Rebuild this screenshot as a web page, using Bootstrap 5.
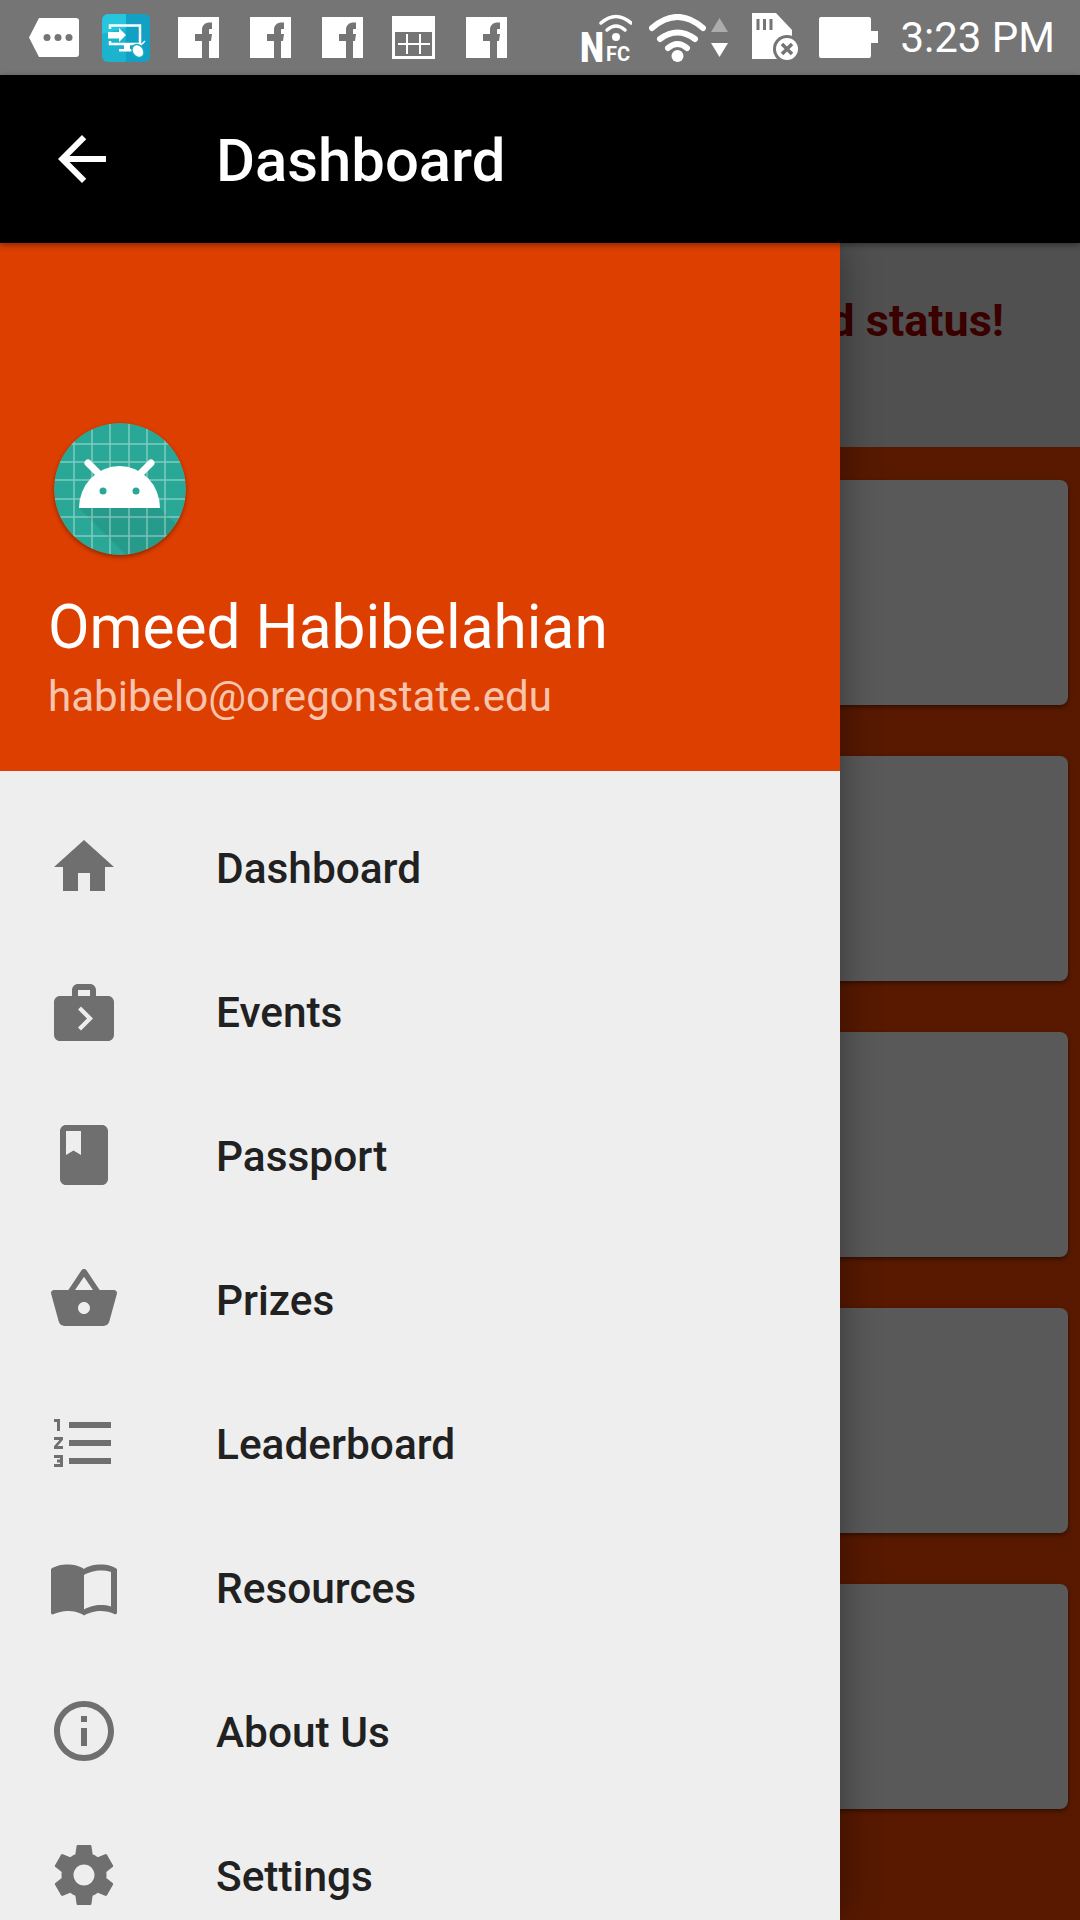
<!DOCTYPE html>
<html>
<head>
  <title>Dashboard</title>
  <link rel="stylesheet" href="https://cdn.jsdelivr.net/npm/bootstrap@5.3.3/dist/css/bootstrap.min.css">
  <style>
    html, body { height: 1920px; overflow: hidden; }
    body { font-family: Roboto, "Liberation Sans", sans-serif; background: #dc3f00; }
    .phone { width: 1080px; height: 1920px; }

    .sys-bar { height: 75px; background: #757575; padding: 0 25px 0 29px; color: #fff; }
    .sys-bar svg { display: block; flex: none; }
    .sys-time { font-size: 42px; line-height: 75px; margin-left: 22px; margin-top: -1px; }
    .ml-teal { margin-left: 23px; }
    .ml-f1 { margin-left: 28px; }
    .ml-f { margin-left: 31px; }
    .ml-tbl { margin-left: 29px; }
    .ml-wifi { margin-left: 17px; }
    .ml-arrows { margin-left: 5px; }
    .ml-sd { margin-left: 23px; }
    .ml-batt { margin-left: 18px; }

    .app-bar { height: 168px; background: #000; padding: 0 0 0 46px; flex-wrap: nowrap; position: relative; z-index: 3; box-shadow: 0 2px 6px rgba(0,0,0,.4); }
    .app-title { font-size: 59.8px; font-weight: 500; color: #fff; margin-left: 98px; margin-top: 5px; line-height: 1; }

    .content-area { height: 1677px; overflow: hidden; background: #dc3f00; }
    .status-panel { height: 204px; background: #c8c8c8; padding: 52px 76px 0 0; }
    .status-text { font-size: 45px; font-weight: 700; color: #920000; line-height: 52px; }
    .card-stack { padding: 33px 12px 0; gap: 51px; }
    .blank-card { height: 225px; background: #dedede; border: 0; border-radius: 8px; box-shadow: 0 2px 5px rgba(0,0,0,.45); }
    .scrim { inset: 0; background: rgba(0,0,0,.6); z-index: 1; }

    .drawer { top: 0; left: 0; bottom: 0; width: 840px; background: #eeeeee; z-index: 2; box-shadow: 0 0 36px rgba(0,0,0,.4); overflow: hidden; }
    .drawer-head { height: 528px; background: #dc3f00; padding: 180px 0 0 48px; color: #fff; }
    .avatar { display: block; width: 132px; height: 132px; margin-left: 6px; border-radius: 50%; box-shadow: 0 2px 4px rgba(0,0,0,.35); }
    .user-name { font-size: 60.4px; line-height: 72px; margin-top: 37px; }
    .user-mail { font-size: 42.1px; line-height: 56px; margin-top: 5px; color: #f8c4ad; }

    .drawer-menu { padding-top: 25px; }
    .menu-row { height: 144px; padding: 0 0 0 48px; background: transparent; border: 0; gap: 96px; font-size: 42.4px; font-weight: 500; color: #212121; }
    .menu-row svg { width: 72px; height: 72px; margin-top: -2px; fill: #6f6f6f; flex: none; }
    .menu-row span { margin-top: 2px; }
  </style>
</head>
<body>
  <div class="phone d-flex flex-column">

    <div class="sys-bar d-flex align-items-center">
      <svg width="50" height="39" viewBox="0 0 50 39"><path fill="#fff" d="M10 0H47a3 3 0 0 1 3 3V36a3 3 0 0 1-3 3H10L0 19.5Z"/><g fill="#757575"><circle cx="18" cy="19.5" r="3.5"/><circle cx="29" cy="19.5" r="3.5"/><circle cx="40" cy="19.5" r="3.5"/></g></svg>
      <svg class="ml-teal" width="48" height="48" viewBox="0 0 48 48">
        <rect width="48" height="48" rx="6" fill="#1cb3cf"/>
        <path fill="#12a0c4" d="M24 0H42a6 6 0 0 1 6 6V42a6 6 0 0 1-6 6H24Z"/>
        <path fill="#2bd0e2" d="M6 0H24V14L0 20V6A6 6 0 0 1 6 0Z" opacity=".7"/>
        <path fill="none" stroke="#fff" stroke-width="2.5" d="M8 15V11.500H38V30H8V27"/>
        <path fill="#fff" d="M6 18H17V14L24 21 17 28V24.500H6Z"/>
        <path fill="#fff" d="M22 30H28V35H35V37.500H17V35H22Z"/>
        <ellipse cx="36" cy="37" rx="5.500" ry="7" fill="#fff" stroke="#19acc9" stroke-width="1.500" transform="rotate(-35 36 37)"/>
        <path d="M39 31L43 27" stroke="#fff" stroke-width="1.500"/>
      </svg>
      <svg class="ml-f1" width="41" height="41" viewBox="0 0 41 41"><path fill="#fff" fill-rule="evenodd" d="M0 0H41V41H0ZM24 41H31V24H33L34 17H31V14C31 12.500 31 12 32 12H34V5.500H32C27 5.500 24 8 24 13V17H17V24H24Z"/></svg>
      <svg class="ml-f" width="41" height="41" viewBox="0 0 41 41"><path fill="#fff" fill-rule="evenodd" d="M0 0H41V41H0ZM24 41H31V24H33L34 17H31V14C31 12.500 31 12 32 12H34V5.500H32C27 5.500 24 8 24 13V17H17V24H24Z"/></svg>
      <svg class="ml-f" width="41" height="41" viewBox="0 0 41 41"><path fill="#fff" fill-rule="evenodd" d="M0 0H41V41H0ZM24 41H31V24H33L34 17H31V14C31 12.500 31 12 32 12H34V5.500H32C27 5.500 24 8 24 13V17H17V24H24Z"/></svg>
      <svg class="ml-tbl" width="43" height="43" viewBox="0 0 43 43"><rect width="43" height="43" fill="#fff"/><rect x="3" y="16" width="37" height="24" fill="#757575"/><path stroke="#fff" stroke-width="2" d="M6 28H38M15 18V38M28 18V38"/></svg>
      <svg class="ml-f" width="41" height="41" viewBox="0 0 41 41"><path fill="#fff" fill-rule="evenodd" d="M0 0H41V41H0ZM24 41H31V24H33L34 17H31V14C31 12.500 31 12 32 12H34V5.500H32C27 5.500 24 8 24 13V17H17V24H24Z"/></svg>

      <svg class="ms-auto" width="52" height="68" viewBox="0 -10 52 68">
        <g fill="none" stroke="#fff" stroke-width="3.500" stroke-linecap="round"><path d="M21 9Q36 -4 51 9"/><path d="M27 16Q36 8 45 16"/></g>
        <circle cx="36" cy="23" r="4" fill="#fff"/>
        <text x="0" y="48" fill="#fff" font-family="Roboto, sans-serif" font-weight="900" font-size="42" textLength="24" lengthAdjust="spacingAndGlyphs">N</text>
        <text x="26" y="47" fill="#fff" font-family="Roboto, sans-serif" font-weight="700" font-size="20">FC</text>
      </svg>
      <svg class="ml-wifi" width="57" height="48" viewBox="0 0 57 48">
        <g fill="none" stroke="#fff" stroke-width="6" stroke-linecap="round"><path d="M3 14Q28.500 -8 54 14"/><path d="M11 25Q28.500 12 46 25"/><path d="M19 34Q28.500 26 38 34"/></g>
        <circle cx="28.500" cy="42" r="6" fill="#fff"/>
      </svg>
      <svg class="ml-arrows" width="17" height="39" viewBox="0 0 17 39"><path fill="#fff" opacity=".4" d="M8.500 0L17 14H0Z"/><path fill="#fff" d="M0 25H17L8.500 39Z"/></svg>
      <svg class="ml-sd" width="50" height="50" viewBox="0 0 50 50">
        <path fill="#fff" d="M1 0H25L41 17V46H1Z"/>
        <path stroke="#757575" stroke-width="3" d="M7 6V17M13.500 6V17M20 6V17"/>
        <circle cx="36" cy="36" r="14" fill="#757575"/>
        <circle cx="36" cy="36" r="11" fill="#fff"/>
        <path stroke="#757575" stroke-width="3.500" d="M31 31L41 41M41 31L31 41"/>
      </svg>
      <svg class="ml-batt" width="59" height="41" viewBox="0 0 59 41"><path fill="#fff" d="M2 0H50a2 2 0 0 1 2 2V14H59V26H52V39a2 2 0 0 1-2 2H2a2 2 0 0 1-2-2V2a2 2 0 0 1 2-2Z"/></svg>
      <div class="sys-time">3:23 PM</div>
    </div>

    <nav class="navbar app-bar align-items-center justify-content-start">
      <svg width="72" height="72" viewBox="0 0 24 24"><path fill="#fff" d="M20 11H7.830l5.590-5.590L12 4l-8 8 8 8 1.410-1.410L7.830 13H20v-2z"/></svg>
      <span class="app-title">Dashboard</span>
    </nav>

    <div class="content-area position-relative">
      <div class="status-panel d-flex justify-content-end align-items-start">
        <div class="status-text text-nowrap">d status!</div>
      </div>
      <div class="card-stack d-flex flex-column">
        <div class="card blank-card"></div>
        <div class="card blank-card"></div>
        <div class="card blank-card"></div>
        <div class="card blank-card"></div>
        <div class="card blank-card"></div>
      </div>

      <div class="scrim position-absolute"></div>

      <aside class="drawer position-absolute">
        <div class="drawer-head">
          <svg class="avatar" viewBox="0 0 132 132">
            <defs><clipPath id="avatarClip"><circle cx="66" cy="66" r="66"/></clipPath></defs>
            <g clip-path="url(#avatarClip)">
              <rect width="132" height="132" fill="#2aa897"/>
              <path fill="#000" opacity=".08" d="M25 85H106L132 111V132H72Z"/>
              <path stroke="#fff" stroke-opacity=".4" stroke-width="1.500" d="M20 0V132M38 0V132M56 0V132M75 0V132M93 0V132M111 0V132M0 21H132M0 39H132M0 57H132M0 76H132M0 94H132M0 113H132"/>
              <path fill="none" stroke="#fff" stroke-width="7" stroke-linecap="round" d="M34 40L46 52M97 40L85 52"/>
              <path fill="#fff" d="M25 85A40.500 42 0 0 1 106 85Z"/>
              <circle cx="49" cy="68" r="3.500" fill="#2aa897"/>
              <circle cx="82" cy="68" r="3.500" fill="#2aa897"/>
            </g>
          </svg>
          <div class="user-name">Omeed Habibelahian</div>
          <div class="user-mail">habibelo@oregonstate.edu</div>
        </div>

        <div class="list-group list-group-flush drawer-menu">
          <a class="list-group-item menu-row d-flex align-items-center">
            <svg viewBox="0 0 24 24"><path d="M10 20v-6h4v6h5v-8h3L12 3 2 12h3v8z"/></svg>
            <span>Dashboard</span>
          </a>
          <a class="list-group-item menu-row d-flex align-items-center">
            <svg viewBox="0 0 24 24"><path d="M20 7h-4V5c0-.55-.22-1.050-.59-1.410C15.050 3.220 14.550 3 14 3h-4c-1.100 0-2 .9-2 2v2H4c-1.100 0-2 .9-2 2v11c0 1.100.9 2 2 2h16c1.100 0 2-.9 2-2V9c0-1.100-.9-2-2-2zM10 5h4v2h-4V5zm1 13.500l-1-1 3-3-3-3 1-1 4 4-4 4z"/></svg>
            <span>Events</span>
          </a>
          <a class="list-group-item menu-row d-flex align-items-center">
            <svg viewBox="0 0 24 24"><path d="M18 2H6c-1.100 0-2 .9-2 2v16c0 1.100.9 2 2 2h12c1.100 0 2-.9 2-2V4c0-1.100-.9-2-2-2zM6 4h5v8l-2.500-1.500L6 12V4z"/></svg>
            <span>Passport</span>
          </a>
          <a class="list-group-item menu-row d-flex align-items-center">
            <svg viewBox="0 0 24 24"><path d="M17.210 9l-4.380-6.560c-.19-.28-.51-.42-.83-.42-.32 0-.64.14-.83.43L6.790 9H2c-.55 0-1 .45-1 1 0 .09.01.18.04.27l2.540 9.270c.23.84 1 1.460 1.920 1.460h13c.92 0 1.690-.62 1.930-1.460l2.540-9.270L23 10c0-.55-.45-1-1-1h-4.790zM9 9l3-4.400L15 9H9zm3 8c-1.100 0-2-.9-2-2s.9-2 2-2 2 .9 2 2-.9 2-2 2z"/></svg>
            <span>Prizes</span>
          </a>
          <a class="list-group-item menu-row d-flex align-items-center">
            <svg viewBox="0 0 24 24"><path d="M2 17h2v.5H3v1h1v.5H2v1h3v-4H2v1zm1-9h1V4H2v1h1v3zm-1 3h1.800L2 13.100v.9h3v-1H3.200L5 10.900V10H2v1zm5-6v2h14V5H7zm0 14h14v-2H7v2zm0-6h14v-2H7v2z"/></svg>
            <span>Leaderboard</span>
          </a>
          <a class="list-group-item menu-row d-flex align-items-center">
            <svg viewBox="0 0 24 24"><path d="M21 5c-1.110-.35-2.330-.5-3.500-.5-1.950 0-4.050.4-5.500 1.500-1.450-1.100-3.550-1.500-5.500-1.500S2.450 4.900 1 6v14.650c0 .25.25.5.5.5.1 0 .15-.05.25-.05C3.100 20.450 5.050 20 6.500 20c1.950 0 4.050.4 5.500 1.500 1.350-.85 3.800-1.500 5.500-1.500 1.650 0 3.350.3 4.750 1.050.1.05.15.05.25.05.25 0 .5-.25.5-.5V6c-.6-.45-1.250-.75-2-1zm0 13.500c-1.100-.35-2.300-.5-3.500-.5-1.700 0-4.150.65-5.500 1.500V8c1.350-.85 3.800-1.500 5.500-1.500 1.200 0 2.400.15 3.500.5v11.500z"/></svg>
            <span>Resources</span>
          </a>
          <a class="list-group-item menu-row d-flex align-items-center">
            <svg viewBox="0 0 24 24"><path d="M11 17h2v-6h-2v6zm1-15C6.480 2 2 6.480 2 12s4.480 10 10 10 10-4.480 10-10S17.520 2 12 2zm0 18c-4.410 0-8-3.590-8-8s3.590-8 8-8 8 3.590 8 8-3.590 8-8 8zM11 9h2V7h-2v2z"/></svg>
            <span>About Us</span>
          </a>
          <a class="list-group-item menu-row d-flex align-items-center">
            <svg viewBox="0 0 24 24"><path d="M19.430 12.980c.04-.32.07-.64.07-.98s-.03-.66-.07-.98l2.110-1.650c.19-.15.24-.42.12-.64l-2-3.460c-.12-.22-.39-.3-.61-.22l-2.490 1c-.52-.4-1.080-.73-1.690-.98l-.38-2.650C14.460 2.180 14.250 2 14 2h-4c-.25 0-.46.18-.49.42l-.38 2.650c-.61.25-1.170.59-1.690.98l-2.490-1c-.23-.09-.49 0-.61.22l-2 3.460c-.13.22-.07.49.12.64l2.110 1.650c-.04.32-.07.65-.07.98s.03.66.07.98l-2.110 1.650c-.19.15-.24.42-.12.64l2 3.460c.12.22.39.3.61.22l2.490-1c.52.4 1.080.73 1.690.98l.38 2.650c.03.24.24.42.49.42h4c.25 0 .46-.18.49-.42l.38-2.650c.61-.25 1.170-.59 1.690-.98l2.490 1c.23.09.49 0 .61-.22l2-3.460c.12-.22.07-.49-.12-.64l-2.110-1.650zM12 15.500c-1.930 0-3.500-1.570-3.500-3.500s1.570-3.500 3.500-3.500 3.500 1.570 3.500 3.500-1.570 3.500-3.500 3.500z"/></svg>
            <span>Settings</span>
          </a>
        </div>
      </aside>
    </div>
  </div>

  <script src="https://cdn.jsdelivr.net/npm/bootstrap@5.3.3/dist/js/bootstrap.bundle.min.js"></script>
</body>
</html>
